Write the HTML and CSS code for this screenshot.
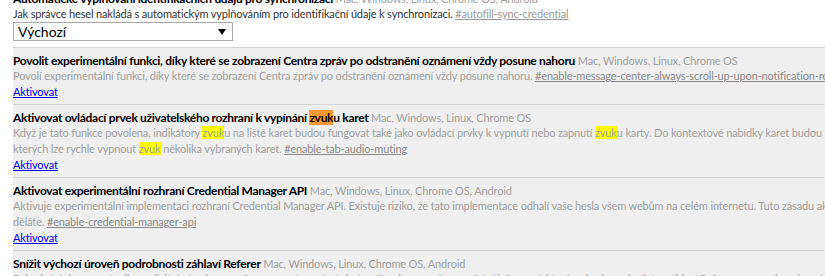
FILE: index.html
```html
<!DOCTYPE html>
<html lang="cs">
<head>
    <meta charset="UTF-8">
    <title>Příznaky</title>
    <link rel="stylesheet" href="styles.css">
</head>
<body>

<div class="flags-list">
    <div class="experiment experiment-enabled">
        <div class="experiment-name">
            <span class="name">Automatické vyplňování identifikačních údajů pro synchronizaci</span>
            <span class="platforms">Mac, Windows, Linux, Chrome OS, Android</span>
        </div>
        <div class="experiment-desc">
            Jak správce hesel nakládá s automatickým vyplňováním pro identifikační údaje k synchronizaci.
            <a class="permalink" href="#autofill-sync-credential">#autofill-sync-credential</a>
        </div>
        <div class="experiment-actions">
            <span class="select-wrap">
                <select class="experiment-select">
                    <option>Výchozí</option>
                    <option>Povoleno</option>
                    <option>Zakázáno</option>
                </select>
            </span>
        </div>
    </div>

    <div class="experiment">
        <div class="experiment-name">
            <span class="name">Povolit experimentální funkci, díky které se zobrazení Centra zpráv po odstranění oznámení vždy posune nahoru</span>
            <span class="platforms">Mac, Windows, Linux, Chrome OS</span>
        </div>
        <div class="experiment-desc">
            Povolí experimentální funkci, díky které se zobrazení Centra zpráv po odstranění oznámení vždy posune nahoru.
            <a class="permalink" href="#enable-message-center-always-scroll-up-upon-notification-removal">#enable-message-center-always-scroll-up-upon-notification-removal</a>
        </div>
        <div class="experiment-actions">
            <a class="enable-link" href="#">Aktivovat</a>
        </div>
    </div>

    <div class="experiment">
        <div class="experiment-name">
            <span class="name">Aktivovat ovládací prvek uživatelského rozhraní k vypínání <mark class="hit-active">zvuk</mark>u karet</span>
            <span class="platforms">Mac, Windows, Linux, Chrome OS</span>
        </div>
        <div class="experiment-desc">
            Když je tato funkce povolena, indikátory <mark>zvuk</mark>u na liště karet budou fungovat také jako ovládací prvky k vypnutí nebo zapnutí <mark>zvuk</mark>u karty. Do kontextové nabídky karet budou také přidány příkazy, pomocí
            kterých lze rychle vypnout <mark>zvuk</mark> několika vybraných karet.
            <a class="permalink" href="#enable-tab-audio-muting">#enable-tab-audio-muting</a>
        </div>
        <div class="experiment-actions">
            <a class="enable-link" href="#">Aktivovat</a>
        </div>
    </div>

    <div class="experiment">
        <div class="experiment-name">
            <span class="name">Aktivovat experimentální rozhraní Credential Manager API</span>
            <span class="platforms">Mac, Windows, Linux, Chrome OS, Android</span>
        </div>
        <div class="experiment-desc">
            Aktivuje experimentální implementaci rozhraní Credential Manager API. Existuje riziko, že tato implementace odhalí vaše hesla všem webům na celém internetu. Tuto zásadu aktivujte, pouze pokud víte, co
            děláte.
            <a class="permalink" href="#enable-credential-manager-api">#enable-credential-manager-api</a>
        </div>
        <div class="experiment-actions">
            <a class="enable-link" href="#">Aktivovat</a>
        </div>
    </div>

    <div class="experiment">
        <div class="experiment-name">
            <span class="name">Snížit výchozí úroveň podrobnosti záhlaví Referer</span>
            <span class="platforms">Mac, Windows, Linux, Chrome OS, Android</span>
        </div>
        <div class="experiment-desc">
            Pokud stránka nenastavila explicitní zásady pro referrery, nastavením tohoto příznaku omezíte množství informací, které se budou odesílat v záhlaví Referer pro nezdomainové požadavky.
            <a class="permalink" href="#reduced-referrer-granularity">#reduced-referrer-granularity</a>
        </div>
        <div class="experiment-actions">
            <a class="enable-link" href="#">Aktivovat</a>
        </div>
    </div>
</div>

</body>
</html>
```

FILE: styles.css
```css
body {
    font-family: Lato, "Noto Sans", sans-serif;
    font-size: 11px;
    letter-spacing: -0.15px;
    margin: 0;
    padding: 0;
    background-color: #ffffff;
    overflow: hidden;
}

.flags-list {
    margin: -14px 0 0 13px;
    width: 970px;
    background-color: #efefef;
}

.experiment {
    border-top: 1px solid #d4d4d4;
    padding: 5px 0 4px;
    color: #a0a0a0;
}

.experiment-enabled {
    border-top: none;
    padding-bottom: 6px;
    background-color: #ffffff;
    color: #333;
}

.experiment-name {
    line-height: 15px;
    white-space: nowrap;
}

.experiment-name .name {
    font-size: 12px;
    font-weight: bold;
    letter-spacing: -0.3px;
    color: #000;
}

.experiment-name .platforms {
    color: #a0a0a0;
}

.experiment-desc {
    line-height: 16px;
}

.permalink {
    color: #8a8a8a;
}

.experiment-enabled .permalink {
    color: #999;
}

mark {
    background-color: #ffff00;
    color: inherit;
}

mark.hit-active {
    background-color: #ff9632;
}

.experiment-actions {
    line-height: 16px;
}

.enable-link {
    color: #0000ee;
}

.select-wrap {
    display: inline-block;
    position: relative;
    vertical-align: top;
}

.experiment-select {
    -webkit-appearance: none;
    appearance: none;
    display: block;
    width: 220px;
    height: 19px;
    margin: 0;
    padding: 0 0 0 4px;
    border: 1px solid #a9a9a9;
    border-radius: 0;
    background-color: #fff;
    font-family: Lato, "Noto Sans", sans-serif;
    font-size: 14px;
    line-height: 17px;
    color: #000;
}

.select-wrap::after {
    content: "";
    position: absolute;
    right: 7px;
    top: 7px;
    border-left: 4px solid transparent;
    border-right: 4px solid transparent;
    border-top: 6px solid #000;
    pointer-events: none;
}
```
